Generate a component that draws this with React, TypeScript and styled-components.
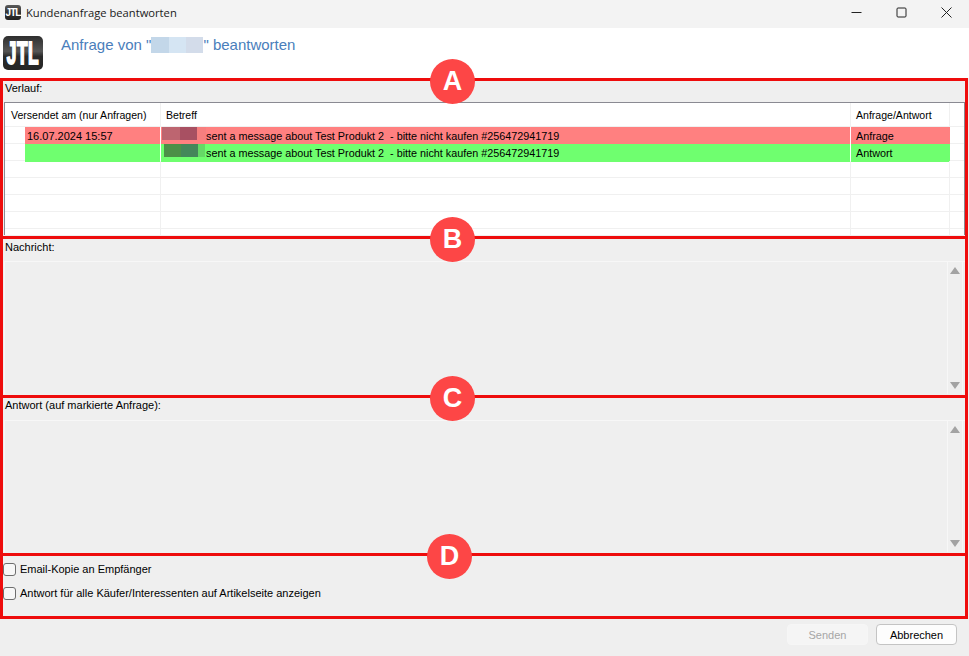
import React from "react";
import styled, { createGlobalStyle } from "styled-components";

const GlobalStyle = createGlobalStyle`
  html, body {
    margin: 0;
    padding: 0;
    background: #efefef;
  }
  body {
    font-family: "Liberation Sans", Arial, sans-serif;
    font-size: 11px;
    color: #000;
  }
  * {
    box-sizing: border-box;
  }
`;

const RED = "#ee0c0c";

const Window = styled.div`
  width: 969px;
  height: 656px;
  display: flex;
  flex-direction: column;
  overflow: hidden;
  background: #efefef;
`;

const TitleBar = styled.div`
  height: 28px;
  flex: none;
  display: flex;
  align-items: center;
  padding: 0 0 4px 5px;
  background: #f3f3f3;
`;

const TitleIcon = styled.div`
  width: 16px;
  height: 15px;
  border-radius: 3px;
  background: linear-gradient(#5a5a5a, #333 55%, #222);
  color: #fff;
  font: 700 10px/15px "Liberation Sans", sans-serif;
  letter-spacing: -1px;
  text-align: center;
  margin-right: 5px;
`;

const TitleText = styled.span`
  font-family: "Open Sans", sans-serif;
  font-size: 11.2px;
  color: #1a1a1a;
  flex: 1;
`;

const WindowButtons = styled.div`
  display: flex;
  margin-right: 0;
`;

const WindowButton = styled.div`
  width: 45px;
  height: 24px;
  display: flex;
  align-items: center;
  justify-content: center;
`;

const Header = styled.div`
  height: 50px;
  flex: none;
  display: flex;
  background: #fff;
  padding: 8px 0 0 3px;
`;

const Logo = styled.div`
  width: 40px;
  height: 34px;
  border-radius: 5px;
  background: linear-gradient(#2e2e2e, #555 45%, #2a2a2a 60%, #262626);
  color: #fff;
  display: flex;
  justify-content: center;
  overflow: hidden;
`;

const LogoText = styled.span`
  flex: none;
  font: 700 32px/34px "Liberation Sans", sans-serif;
  -webkit-text-stroke: 2px #fff;
  letter-spacing: 1px;
  transform: scaleX(0.54);
`;

const HeaderTitle = styled.div`
  margin-left: 18px;
  font-size: 15px;
  line-height: 18px;
  color: #4a7ebb;
  display: flex;
  white-space: pre;
`;

const Redaction = styled.span`
  display: inline-flex;
  height: 16px;
  margin-top: 1px;
`;

const Blur = styled.span<{ $w: number; $c: string; $h?: number }>`
  display: block;
  width: ${(p) => p.$w}px;
  height: ${(p) => p.$h ?? 16}px;
  background: ${(p) => p.$c};
`;

const Frame = styled.div`
  flex: none;
  width: 968px;
  border-left: 3px solid ${RED};
  border-right: 3px solid ${RED};
  border-bottom: 3px solid ${RED};
`;

const Section = styled.section<{ $h: number }>`
  position: relative;
  height: ${(p) => p.$h}px;
  border-top: 3px solid ${RED};
  display: flex;
  flex-direction: column;
`;

const Badge = styled.div<{ $x: number }>`
  position: absolute;
  left: ${(p) => p.$x}px;
  top: -22px;
  width: 45px;
  height: 45px;
  border-radius: 50%;
  background: #fd4646;
  color: #fff;
  font: 700 27px/45px "Liberation Sans", sans-serif;
  text-align: center;
  z-index: 2;
`;

const Label = styled.div<{ $t?: number }>`
  padding: ${(p) => p.$t ?? 0}px 0 0 2px;
  height: 18px;
  line-height: 14px;
`;

const Grid = styled.div`
  margin: 3px 0 0 1px;
  width: 961px;
  height: 133px;
  flex: none;
  background: #fff;
  border: 1px solid #8a8a92;
  border-bottom: none;
  overflow: hidden;
`;

const GridRow = styled.div<{ $h: number }>`
  display: grid;
  grid-template-columns: 156px 690px 99px 1fr;
  height: ${(p) => p.$h}px;
  border-bottom: 1px solid #f0f0f0;
`;

const HeadCell = styled.div`
  padding: 5px 0 0 5px;
  font-size: 10.55px;
  line-height: 14px;
  white-space: nowrap;
  border-right: 1px solid #f0f0f0;
  &:first-child {
    padding-left: 6px;
  }
  &:last-child {
    border-right: none;
  }
`;

const FirstCell = styled.div<{ $bg?: string }>`
  margin-left: 20px;
  padding-left: 2px;
  line-height: 18px;
  background: ${(p) => p.$bg ?? "transparent"};
  border-right: 1px solid #fff;
`;

const EmptyCell = styled.div`
  border-right: 1px solid #f0f0f0;
  &:last-child {
    border-right: none;
  }
`;

const Cell = styled.div<{ $bg?: string }>`
  display: flex;
  padding-left: 1px;
  font-size: 10.8px;
  line-height: 18px;
  white-space: pre;
  background: ${(p) => p.$bg ?? "transparent"};
  border-right: 1px solid #fff;
`;

const CellAnswer = styled(Cell)`
  padding-left: 5px;
  border-right: none;
`;

const SubjectBlur = styled.span`
  display: inline-flex;
  width: 44px;
  flex: none;
`;

const TextArea = styled.div`
  margin: 4px 0 1px 1px;
  width: 961px;
  flex: 1;
  border-top: 1px solid #f7f7f7;
  border-left: 1px solid #f7f7f7;
  display: flex;
  justify-content: flex-end;
`;

const ScrollBar = styled.div`
  width: 16px;
  margin-right: 2px;
  border-left: 1px solid #f7f7f7;
  border-right: 1px solid #f7f7f7;
  display: flex;
  flex-direction: column;
  justify-content: space-between;
  align-items: center;
  padding: 5px 0;
`;

const Arrow = styled.div<{ $down?: boolean }>`
  width: 0;
  height: 0;
  border-left: 5px solid transparent;
  border-right: 5px solid transparent;
  ${(p) =>
    p.$down ? "border-top: 7px solid #a3a3a3;" : "border-bottom: 7px solid #a3a3a3;"}
`;

const Options = styled.div`
  display: flex;
  flex-direction: column;
  gap: 10px;
  padding: 6px 0 0;
`;

const Option = styled.label`
  display: flex;
  align-items: center;
  height: 14px;
  gap: 4px;
`;

const Box = styled.span`
  width: 13px;
  height: 13px;
  border: 1px solid #6e6e6e;
  border-radius: 3px;
  background: #f7f7f7;
  flex: none;
`;

const Footer = styled.div`
  flex: 1;
  display: flex;
  justify-content: flex-end;
  gap: 8px;
  padding: 5px 12px 0 0;
`;

const Button = styled.button<{ $disabled?: boolean }>`
  width: 81px;
  height: 21px;
  padding: 0;
  font: inherit;
  border-radius: 4px;
  border: 1px solid ${(p) => (p.$disabled ? "#f6f6f6" : "#c4c4c4")};
  background: ${(p) => (p.$disabled ? "#f5f5f5" : "#fdfdfd")};
  color: ${(p) => (p.$disabled ? "#a6a6a6" : "#000")};
`;

const PINK = "#ff8080";
const GREEN = "#6fff6f";
const SUBJECT = "sent a message about Test Produkt 2  - bitte nicht kaufen #256472941719";

const App = () => (
  <Window>
    <GlobalStyle />
    <TitleBar>
      <TitleIcon>JTL</TitleIcon>
      <TitleText>Kundenanfrage beantworten</TitleText>
      <WindowButtons>
        <WindowButton>
          <svg width="11" height="11" viewBox="0 0 11 11">
            <path d="M0.5 5.5h10" stroke="#222" fill="none" />
          </svg>
        </WindowButton>
        <WindowButton>
          <svg width="11" height="11" viewBox="0 0 11 11">
            <rect x="1" y="1" width="9" height="9" rx="1" stroke="#222" fill="none" />
          </svg>
        </WindowButton>
        <WindowButton>
          <svg width="11" height="11" viewBox="0 0 11 11">
            <path d="M0.5 0.5l10 10M10.5 0.5l-10 10" stroke="#222" fill="none" />
          </svg>
        </WindowButton>
      </WindowButtons>
    </TitleBar>

    <Header>
      <Logo>
        <LogoText>JTL</LogoText>
      </Logo>
      <HeaderTitle>
        Anfrage von "
        <Redaction>
          <Blur $w={18} $c="#c3d7e9" />
          <Blur $w={17} $c="#d5e5f3" />
          <Blur $w={17} $c="#d3dcea" />
        </Redaction>
        " beantworten
      </HeaderTitle>
    </Header>

    <Frame>
      <Section $h={158}>
        <Badge $x={427}>A</Badge>
        <Label>Verlauf:</Label>
        <Grid>
          <GridRow $h={24}>
            <HeadCell>Versendet am (nur Anfragen)</HeadCell>
            <HeadCell>Betreff</HeadCell>
            <HeadCell>Anfrage/Antwort</HeadCell>
            <HeadCell />
          </GridRow>
          <GridRow $h={17}>
            <FirstCell $bg={PINK}>16.07.2024 15:57</FirstCell>
            <Cell $bg={PINK}>
              <SubjectBlur>
                <Blur $w={18} $c="#bd6570" $h={13} />
                <Blur $w={17} $c="#a85062" $h={13} />
                <Blur $w={9} $c="#f77f7f" $h={13} />
              </SubjectBlur>
              {SUBJECT}
            </Cell>
            <CellAnswer $bg={PINK}>Anfrage</CellAnswer>
            <EmptyCell />
          </GridRow>
          <GridRow $h={17}>
            <FirstCell $bg={GREEN} />
            <Cell $bg={GREEN}>
              <SubjectBlur>
                <Blur $w={2} $c={GREEN} $h={13} />
                <Blur $w={17} $c="#4c9047" $h={13} />
                <Blur $w={17} $c="#44875a" $h={13} />
                <Blur $w={7} $c="#65d966" $h={13} />
              </SubjectBlur>
              {SUBJECT}
            </Cell>
            <CellAnswer $bg={GREEN}>Antwort</CellAnswer>
            <EmptyCell />
          </GridRow>
          {[0, 1, 2, 3, 4].map((i) => (
            <GridRow key={i} $h={17}>
              <EmptyCell />
              <EmptyCell />
              <EmptyCell />
              <EmptyCell />
            </GridRow>
          ))}
        </Grid>
      </Section>

      <Section $h={159}>
        <Badge $x={427}>B</Badge>
        <Label $t={1}>Nachricht:</Label>
        <TextArea>
          <ScrollBar>
            <Arrow />
            <Arrow $down />
          </ScrollBar>
        </TextArea>
      </Section>

      <Section $h={158}>
        <Badge $x={427}>C</Badge>
        <Label>Antwort (auf markierte Anfrage):</Label>
        <TextArea>
          <ScrollBar>
            <Arrow />
            <Arrow $down />
          </ScrollBar>
        </TextArea>
      </Section>

      <Section $h={63}>
        <Badge $x={424}>D</Badge>
        <Options>
          <Option>
            <Box />
            Email-Kopie an Empfänger
          </Option>
          <Option>
            <Box />
            Antwort für alle Käufer/Interessenten auf Artikelseite anzeigen
          </Option>
        </Options>
      </Section>
    </Frame>

    <Footer>
      <Button $disabled>Senden</Button>
      <Button>Abbrechen</Button>
    </Footer>
  </Window>
);

export default App;
